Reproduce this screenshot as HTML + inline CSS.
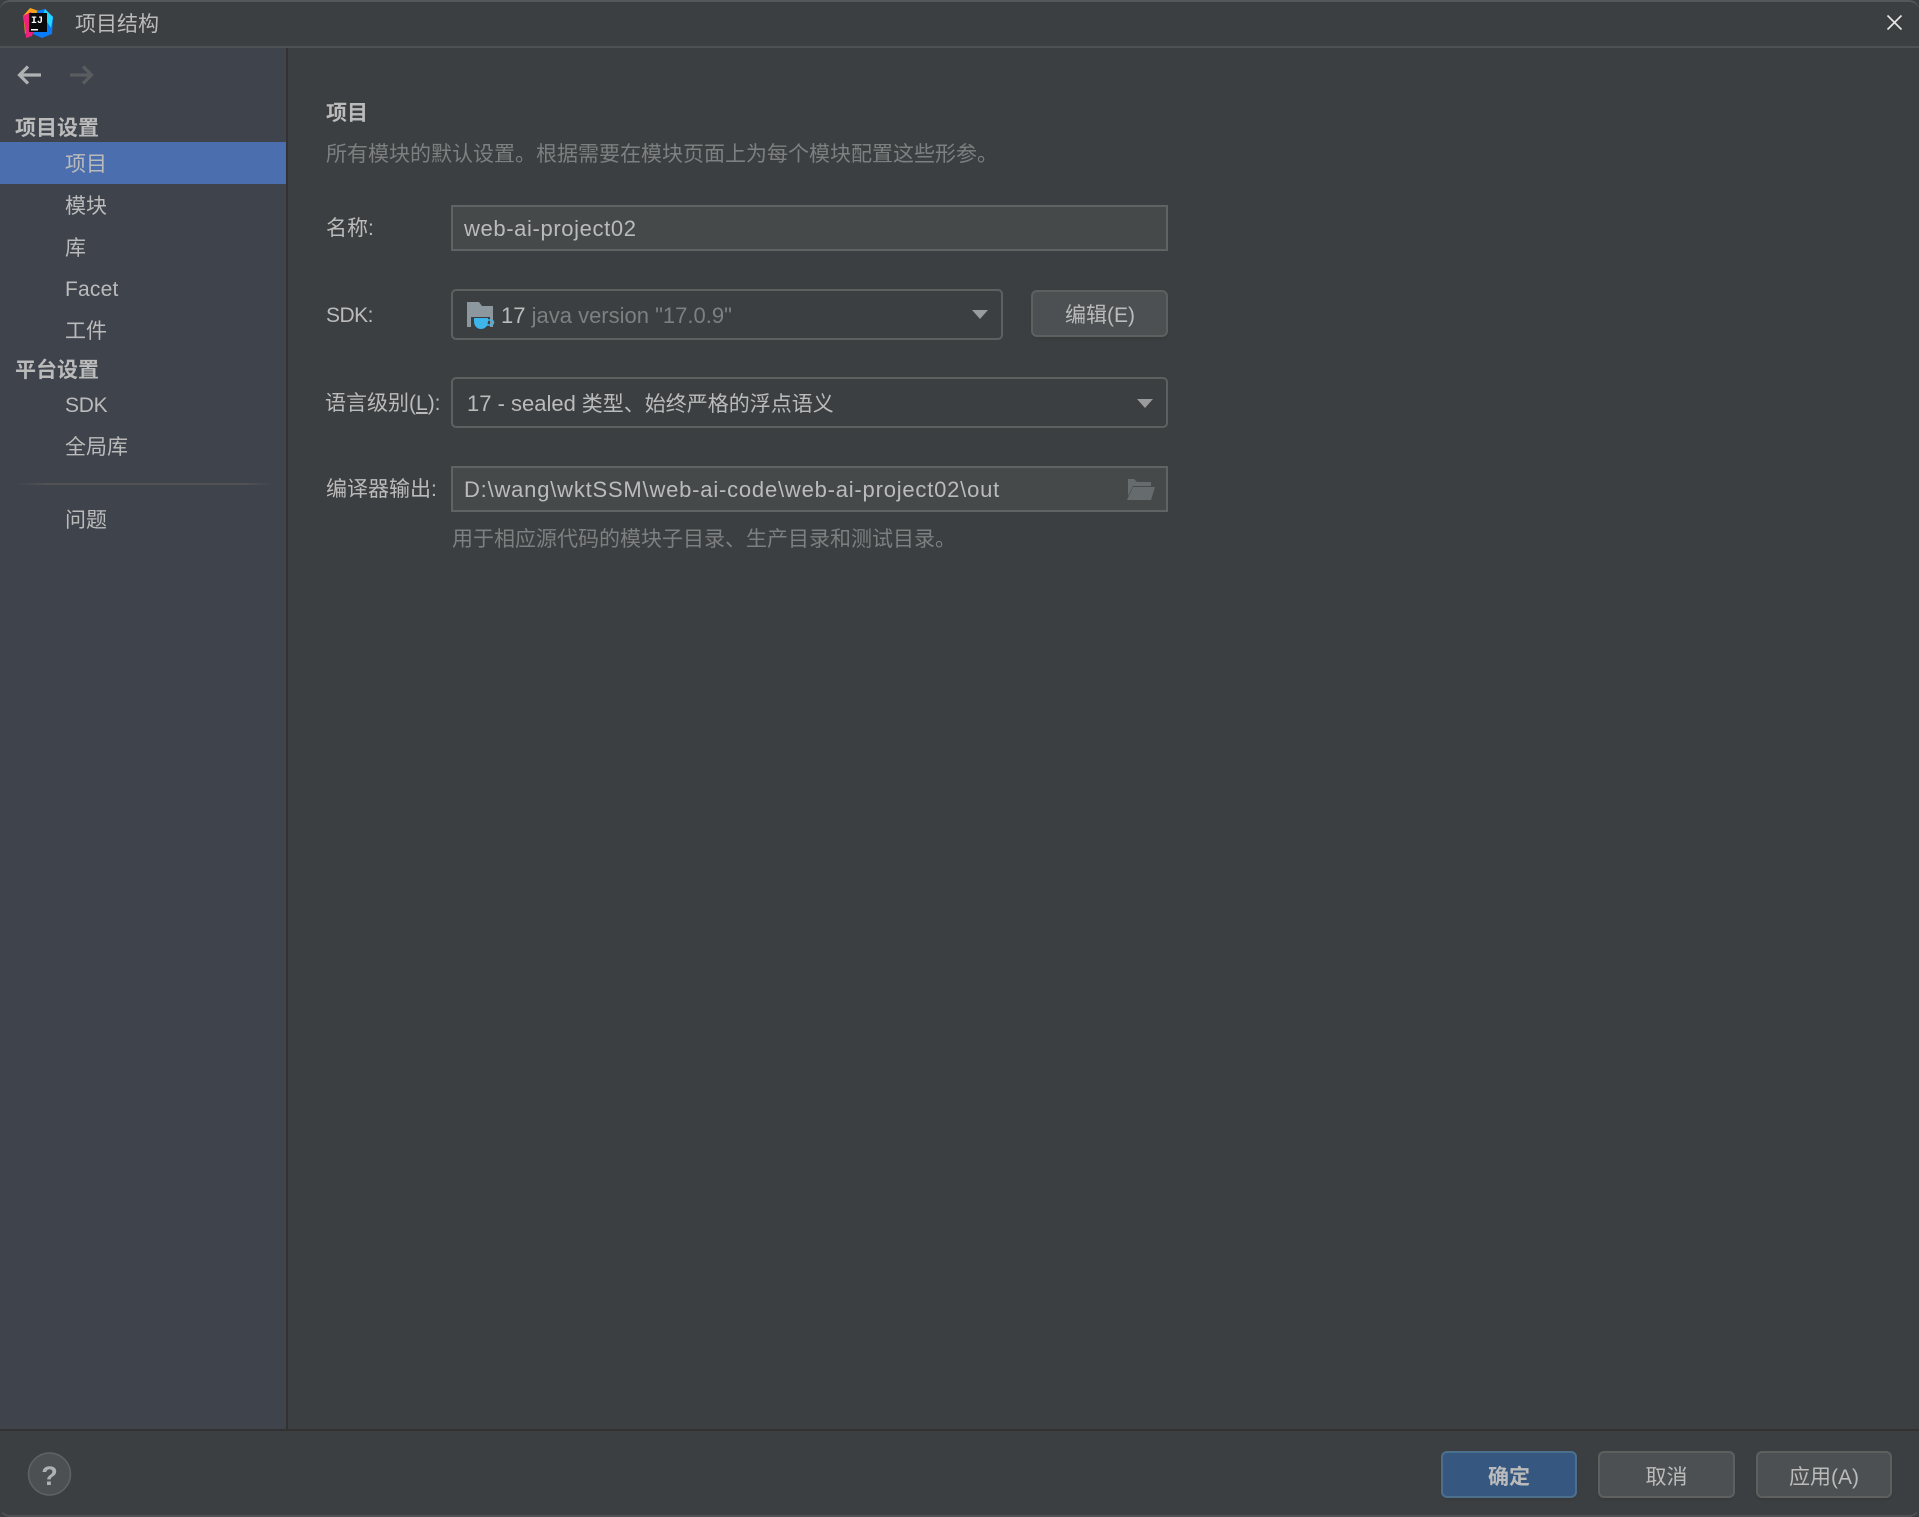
<!DOCTYPE html>
<html lang="zh"><head><meta charset="utf-8"><title>项目结构</title>
<style>
html,body{margin:0;padding:0;background:#3c3f41}
#w{position:relative;width:1919px;height:1517px;overflow:hidden;background:#3c3f41;font-family:"Liberation Sans","Noto Sans CJK SC",sans-serif;font-size:21px;color:#bbb}
.t{position:absolute;white-space:nowrap;height:30px;line-height:30px;margin-top:1px}
.b{font-weight:700}
.box{position:absolute;box-sizing:border-box;border:2px solid #606263}
.in{background:#45494a}
.cb{background:#3c3f41;border-radius:5px;border-color:#5e6060}
.btn{position:absolute;box-sizing:border-box;background:#4c5052;border:2px solid #5e6060;border-radius:6px;text-align:center;line-height:49px;height:47px;box-shadow:0 2px 2px rgba(0,0,0,.08)}
.d{color:#7d7f80}
.l{font-size:22px}
svg{position:absolute;overflow:visible}
</style></head><body><div id="w">
<div style="position:absolute;left:0;top:0;width:1919px;height:20px;box-sizing:border-box;border-top:2px solid #555759;border-radius:10px 10px 0 0"></div>
<div style="position:absolute;left:0;bottom:0;width:1919px;height:20px;box-sizing:border-box;border-bottom:2px solid #4e5052;border-left:1px solid transparent;border-right:1px solid transparent;border-radius:0 0 10px 10px"></div>
<div style="position:absolute;left:0;top:46px;width:1919px;height:2px;background:#4e5052"></div>
<div style="position:absolute;left:0;top:48px;width:286px;height:1381px;background:#3e434c"></div>
<div style="position:absolute;left:286px;top:48px;width:2px;height:1381px;background:#323232"></div>
<div style="position:absolute;left:0;top:1429px;width:1919px;height:2px;background:#323232"></div>
<div style="position:absolute;left:0;top:142px;width:286px;height:42px;background:#4b6eaf"></div>
<div style="position:absolute;left:14px;top:483px;width:262px;height:2px;background:linear-gradient(90deg,#3e434c,#505254 12%,#505254 88%,#3e434c)"></div>

<svg style="left:23px;top:8px" width="30" height="30" viewBox="0 0 30 30">
<polygon points="7,0 16,3 10,16 2,26 1,14 0,8" fill="#f9a11b"/>
<polygon points="0,8 8,4 14,12 9,28 3,30 2,18" fill="#f0217e"/>
<polygon points="14,3 22,1 30,9 29,26 19,30 10,26" fill="#087cfa"/>
<polygon points="22,1 30,9 28,20 20,8" fill="#21d7ff"/>
<rect x="6" y="5" width="18" height="19" fill="#0a0a0c"/>
<rect x="8" y="21" width="7" height="1.500" fill="#fff"/>
<text x="8" y="15" font-family="Liberation Mono" font-weight="700" font-size="10" fill="#fff">IJ</text>
</svg>
<div class="t" style="left:75px;top:9px">项目结构</div>
<svg style="left:1887px;top:15px" width="15" height="15" viewBox="0 0 15 15"><path d="M.5.5l14 14M14.500.5l-14 14" stroke="#e8e8e8" stroke-width="1.600" fill="none"/></svg>

<svg style="left:17px;top:65px" width="24" height="20" viewBox="0 0 24 20"><path d="M24 10H3M11 1.500L2.500 10l8.500 8.500" stroke="#afb1b3" stroke-width="3.200" fill="none"/></svg>
<svg style="left:70px;top:65px" width="24" height="20" viewBox="0 0 24 20"><path d="M0 10h21M13 1.500l8.500 8.500-8.500 8.500" stroke="#5a5d5f" stroke-width="3.200" fill="none"/></svg>

<div class="t b" style="left:15px;top:113px">项目设置</div>
<div class="t" style="left:65px;top:149px">项目</div>
<div class="t" style="left:65px;top:191px">模块</div>
<div class="t" style="left:65px;top:233px">库</div>
<div class="t" style="left:65px;top:274px;letter-spacing:.2px">Facet</div>
<div class="t" style="left:65px;top:316px">工件</div>
<div class="t b" style="left:15px;top:355px">平台设置</div>
<div class="t" style="left:65px;top:390px;letter-spacing:-.3px">SDK</div>
<div class="t" style="left:65px;top:432px">全局库</div>
<div class="t" style="left:65px;top:505px">问题</div>

<div class="t b" style="left:326px;top:98px">项目</div>
<div class="t d" style="left:326px;top:139px">所有模块的默认设置。根据需要在模块页面上为每个模块配置这些形参。</div>

<div class="t" style="left:326px;top:213px">名称:</div>
<div class="box in" style="left:451px;top:205px;width:717px;height:46px"></div>
<div class="t l" style="left:464px;top:213px;letter-spacing:.62px">web-ai-project02</div>

<div class="t" style="left:326px;top:300px;letter-spacing:-.5px">SDK:</div>
<div class="box cb" style="left:451px;top:289px;width:552px;height:51px"></div>
<svg style="left:466px;top:302px" width="30" height="30" viewBox="0 0 30 30">
<path d="M1 0h12l3 4h11v21H1z" fill="#8c979e"/>
<path d="M5 15h19v12H5z" fill="#3c3f41"/>
<path d="M8 16h14v3c0 5-3 8-7 8s-7-3-7-8z" fill="#3db5ea"/>
<path d="M22 18h3a2.500 2.500 0 0 1 0 5h-5" stroke="#3db5ea" stroke-width="1.500" fill="none"/>
</svg>
<div class="t l" style="left:501px;top:300px">17 <span class="d">java version "17.0.9"</span></div>
<svg style="left:972px;top:310px" width="16" height="9" viewBox="0 0 16 9"><path d="M0 0h16L8 9z" fill="#9a9b9c"/></svg>
<div class="btn" style="left:1031px;top:290px;width:137px;padding-left:1px;line-height:47px">编辑(E)</div>

<div class="t" style="left:325px;top:388px">语言级别(<u>L</u>):</div>
<div class="box cb" style="left:451px;top:377px;width:717px;height:51px"></div>
<div class="t" style="left:467px;top:388px"><span class="l">17 - sealed</span> 类型、始终严格的浮点语义</div>
<svg style="left:1137px;top:399px" width="16" height="9" viewBox="0 0 16 9"><path d="M0 0h16L8 9z" fill="#9a9b9c"/></svg>

<div class="t" style="left:326px;top:474px">编译器输出:</div>
<div class="box in" style="left:451px;top:466px;width:717px;height:46px"></div>
<div class="t l" style="left:464px;top:474px;letter-spacing:.79px">D:\wang\wktSSM\web-ai-code\web-ai-project02\out</div>
<svg style="left:1127px;top:479px" width="28" height="21" viewBox="0 0 28 21"><path d="M0 0h7l3 3h14v4H6L1 17V0z" fill="#666c6e"/><path d="M6 8h22l-4 13H0z" fill="#666c6e"/></svg>
<div class="t d" style="left:452px;top:524px">用于相应源代码的模块子目录、生产目录和测试目录。</div>

<svg style="left:28px;top:1452px" width="44" height="44" viewBox="0 0 44 44"><circle cx="21.500" cy="22" r="21" fill="#4c5052" stroke="#5f6365" stroke-width="1.500"/></svg>
<div class="t b" style="left:41px;top:1460px;font-size:27px;color:#afb1b3;width:17px;text-align:center">?</div>

<div class="btn b" style="left:1441px;top:1451px;width:136px;background:#365880;border-color:#4c708c">确定</div>
<div class="btn" style="left:1598px;top:1451px;width:137px">取消</div>
<div class="btn" style="left:1756px;top:1451px;width:136px">应用(A)</div>
</div></body></html>
